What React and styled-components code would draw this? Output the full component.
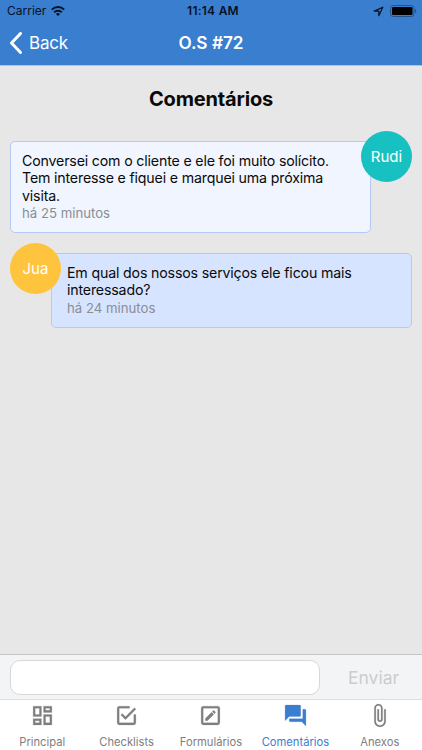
import React from "react";
import styled, { createGlobalStyle } from "styled-components";

const GlobalStyle = createGlobalStyle`
  * {
    box-sizing: border-box;
  }
  body {
    margin: 0;
    font-family: Inter, "Liberation Sans", sans-serif;
    color: #0a0a0a;
  }
`;

const Screen = styled.div`
  display: flex;
  flex-direction: column;
  width: 422px;
  height: 750px;
  overflow: hidden;
  background-color: #e7e7e7;
`;

const Header = styled.header`
  height: 66px;
  background-color: #3a7ecf;
  border-bottom: 1px solid #a9c4e8;
`;

const StatusBar = styled.div`
  display: grid;
  grid-template-columns: 1fr auto 1fr;
  align-items: center;
  height: 22px;
  padding: 0 5px 0 7px;
  font-size: 12px;
  line-height: 22px;
  color: #061226;
`;

const Carrier = styled.div`
  display: flex;
  align-items: center;
  gap: 5px;
`;

const Clock = styled.div`
  padding-left: 2px;
  font-weight: 600;
  letter-spacing: 0.25px;
`;

const Indicators = styled.div`
  display: flex;
  align-items: center;
  justify-content: flex-end;
  gap: 6px;
`;

const NavBar = styled.div`
  display: grid;
  grid-template-columns: 1fr auto 1fr;
  align-items: center;
  height: 42px;
  padding: 0 9px;
  color: #fff;
`;

const BackButton = styled.button`
  display: flex;
  align-items: center;
  gap: 7px;
  padding: 0;
  border: 0;
  background: none;
  font: inherit;
  font-size: 17px;
  letter-spacing: -0.2px;
  color: inherit;
`;

const NavTitle = styled.div`
  padding-bottom: 1px;
  font-size: 17.2px;
  font-weight: 600;
`;

const Content = styled.main`
  flex: 1;
  padding: 0 10px;
`;

const Title = styled.h1`
  margin: 20px 0 29px;
  font-size: 20px;
  font-weight: 700;
  line-height: 26px;
  text-align: center;
  letter-spacing: -0.15px;
`;

const Comment = styled.div`
  position: relative;
  height: ${({ $height }) => $height}px;
  margin: ${({ $mine }) => ($mine ? "0 41px 20px 0" : "0 0 0 41px")};
  padding: ${({ $mine }) => ($mine ? "10px 11px" : "10px 15px")};
  border: 1px solid #b5caf3;
  border-radius: 5px;
  background-color: ${({ $mine }) => ($mine ? "#f0f5ff" : "#d6e4ff")};
`;

const Message = styled.div`
  font-size: 14.2px;
  line-height: 17.3px;
  white-space: pre-line;
  letter-spacing: -0.17px;
`;

const Time = styled.div`
  margin-top: 1px;
  font-size: 13.2px;
  line-height: 17px;
  color: #8b8d92;
`;

/* hangs over the outer top corner of the bubble */
const Avatar = styled.div`
  position: absolute;
  top: -11px;
  ${({ $mine }) => ($mine ? "right: -42px;" : "left: -42px;")}
  display: flex;
  align-items: center;
  justify-content: center;
  width: 51px;
  height: 51px;
  border-radius: 50%;
  background-color: ${({ $color }) => $color};
  font-size: 15px;
  color: #fff;
`;

const InputBar = styled.form`
  display: flex;
  align-items: center;
  height: 45px;
  padding: 1px 0 0 10px;
  border-top: 1px solid #c4c5c7;
  background-color: #f3f4f6;
`;

const Input = styled.input`
  width: 310px;
  height: 35px;
  padding: 0 10px;
  border: 1px solid #d7d8da;
  border-radius: 10px;
  outline: 0;
  background-color: #fff;
  font: inherit;
`;

const SendButton = styled.button`
  flex: 1;
  padding: 0 0 0 5px;
  border: 0;
  background: none;
  font: inherit;
  font-size: 17.5px;
  color: #cbccce;
`;

const Tabs = styled.nav`
  display: grid;
  grid-template-columns: repeat(5, 1fr);
  height: 51px;
  border-top: 1px solid #dcdddf;
  background-color: #fff;
`;

const Tab = styled.div`
  display: flex;
  flex-direction: column;
  align-items: center;
  padding-top: 3px;
  font-size: 11.2px;
  line-height: 14px;
  color: ${({ $active }) => ($active ? "#3b7dce" : "#7e7e7e")};

  svg {
    margin-bottom: 7px;
    fill: currentColor;
    stroke: currentColor;
    stroke-width: 0.2;
  }
`;

const comments = [
  {
    mine: true,
    name: "Rudi",
    color: "#17c1c1",
    height: 92,
    text: "Conversei com o cliente e ele foi muito solícito.\nTem interesse e fiquei e marquei uma próxima\nvisita.",
    time: "há 25 minutos",
  },
  {
    mine: false,
    name: "Jua",
    color: "#ffc43d",
    height: 75,
    text: "Em qual dos nossos serviços ele ficou mais\ninteressado?",
    time: "há 24 minutos",
  },
];

const tabs = [
  {
    label: "Principal",
    icon: "M19 5v2h-4V5h4M9 5v6H5V5h4m10 8v6h-4v-6h4M9 17v2H5v-2h4M21 3h-8v6h8V3zM11 3H3v10h8V3zm10 8h-8v10h8V11zm-10 4H3v6h8v-6z",
  },
  {
    label: "Checklists",
    icon: "M19 19H5V5h10V3H5a2 2 0 0 0-2 2v14a2 2 0 0 0 2 2h14a2 2 0 0 0 2-2v-8h-2v8zM7.91 10.08L6.5 11.5 11 16 21 6l-1.41-1.42L11 13.17l-3.09-3.09z",
  },
  {
    label: "Formulários",
    icon: "M19 19V5H5v14h14m0-16a2 2 0 0 1 2 2v14a2 2 0 0 1-2 2H5a2 2 0 0 1-2-2V5a2 2 0 0 1 2-2h14m-2.3 6.35l-1 1-2.05-2.05 1-1c.21-.22.56-.22.77 0l1.28 1.28c.22.21.22.56 0 .77M7 14.94l6.06-6.06 2.06 2.06L9.06 17H7v-2.06z",
  },
  {
    label: "Comentários",
    active: true,
    icon: "M21 6h-2v9H6v2c0 .55.45 1 1 1h11l4 4V7c0-.55-.45-1-1-1zm-4 6V3c0-.55-.45-1-1-1H3c-.55 0-1 .45-1 1v14l4-4h10c.55 0 1-.45 1-1z",
  },
  {
    label: "Anexos",
    icon: "M16.5 6v11.5c0 2.21-1.79 4-4 4s-4-1.79-4-4V5a2.5 2.5 0 0 1 5 0v10.5c0 .55-.45 1-1 1s-1-.45-1-1V6H10v9.5a2.5 2.5 0 0 0 5 0V5c0-2.21-1.79-4-4-4S7 2.79 7 5v12.5c0 3.04 2.46 5.5 5.5 5.5s5.5-2.46 5.5-5.5V6h-1.5z",
  },
];

const App = () => {
  return (
    <>
      <GlobalStyle />
      <Screen>
        <Header>
          <StatusBar>
            <Carrier>
              Carrier
              <svg width="14" height="11" viewBox="0 0 14 11" fill="none" stroke="currentColor" strokeWidth="2">
                <path d="M.8 3.6a8.9 8.9 0 0 1 12.4 0M3.2 6.2a5.4 5.4 0 0 1 7.6 0" />
                <path d="M4.9 8a3 3 0 0 1 4.2 0L7 10.1z" fill="currentColor" stroke="none" />
              </svg>
            </Carrier>
            <Clock>11:14 AM</Clock>
            <Indicators>
              <svg width="11" height="11" viewBox="0 0 11 11" fill="none" stroke="currentColor" strokeWidth="1.2">
                <path d="M9.8 1.2L1.2 5.1h4.6v4.6z" strokeLinejoin="round" />
              </svg>
              <svg width="27" height="12" viewBox="0 0 27 12">
                <rect x=".5" y=".5" width="23.5" height="11" rx="2.8" fill="none" stroke="#24528a" />
                <rect x="2" y="2" width="20.5" height="8" rx="1.3" fill="#000" />
                <path d="M25 4v4c1.8-.6 1.8-3.4 0-4z" fill="#24528a" />
              </svg>
            </Indicators>
          </StatusBar>
          <NavBar>
            <BackButton>
              <svg width="13" height="22" viewBox="0 0 13 22" fill="none" stroke="currentColor" strokeWidth="3">
                <path d="M11.5 1.5L2.5 11l9 9.5" strokeLinecap="round" strokeLinejoin="round" />
              </svg>
              Back
            </BackButton>
            <NavTitle>O.S #72</NavTitle>
          </NavBar>
        </Header>
        <Content>
          <Title>Comentários</Title>
          {comments.map((c) => (
            <Comment key={c.name} $mine={c.mine} $height={c.height}>
              <Message>{c.text}</Message>
              <Time>{c.time}</Time>
              <Avatar $mine={c.mine} $color={c.color}>
                {c.name}
              </Avatar>
            </Comment>
          ))}
        </Content>
        <InputBar>
          <Input />
          <SendButton type="button">Enviar</SendButton>
        </InputBar>
        <Tabs>
          {tabs.map((tab) => (
            <Tab key={tab.label} $active={tab.active}>
              <svg width="25" height="25" viewBox="0 0 24 24">
                <path d={tab.icon} />
              </svg>
              {tab.label}
            </Tab>
          ))}
        </Tabs>
      </Screen>
    </>
  );
};

export default App;
